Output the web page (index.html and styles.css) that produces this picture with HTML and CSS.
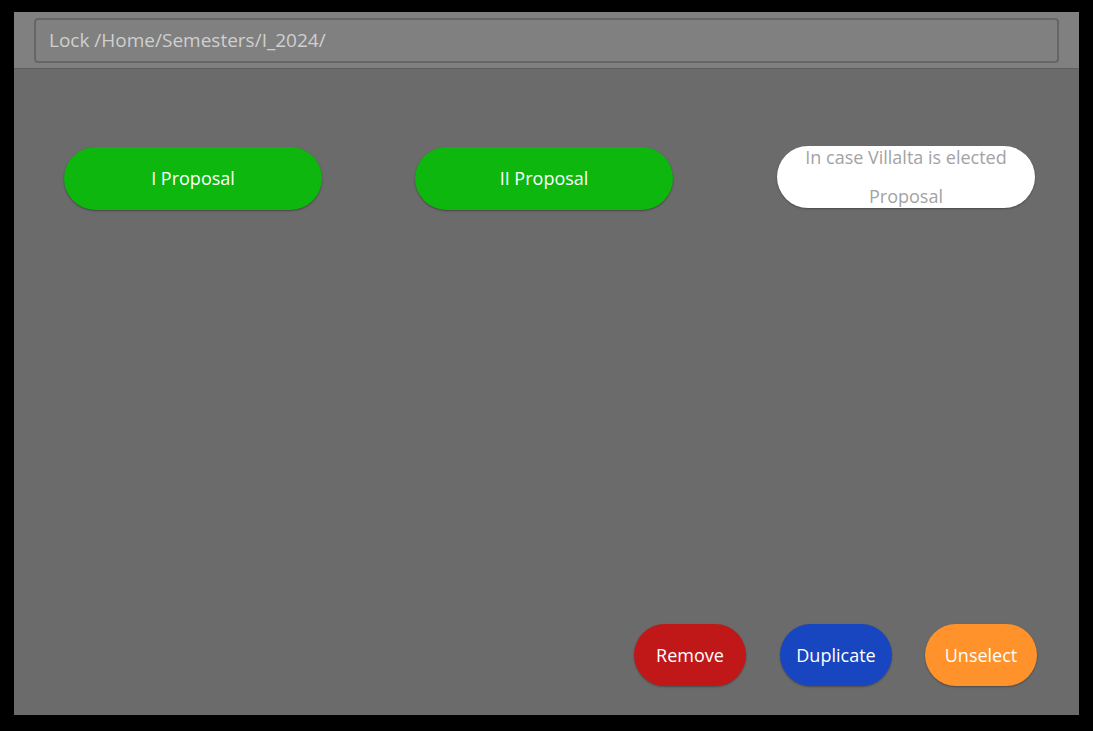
FILE: index.html
```html
<!DOCTYPE html>
<html>
<head>
<meta charset="utf-8">
<link rel="stylesheet" href="styles.css">
</head>
<body>
<div class="frame">
  <div class="panel">
    <header class="topbar">
      <div class="path">Lock /Home/Semesters/I_2024/</div>
    </header>
    <main class="content">
      <div class="options">
        <button class="pill green first">I Proposal</button>
        <button class="pill green second">II Proposal</button>
        <button class="pill white third">In case Villalta is elected<br>Proposal</button>
      </div>
      <div class="actions">
        <button class="act red">Remove</button>
        <button class="act blue">Duplicate</button>
        <button class="act orange">Unselect</button>
      </div>
    </main>
  </div>
</div>
</body>
</html>
```

FILE: styles.css
```css
html, body {
  margin: 0;
  padding: 0;
  background: #000;
}
.frame {
  width: 1093px;
  height: 731px;
  padding: 12px 14px 16px 14px;
  box-sizing: border-box;
  font-family: "Open Sans", "Noto Sans", sans-serif;
}
.panel {
  width: 1065px;
  height: 703px;
  background: #6b6b6b;
  display: flex;
  flex-direction: column;
}
.topbar {
  height: 57px;
  background: #808080;
  border-bottom: 1px solid #5e5e5e;
  box-sizing: border-box;
  padding: 6px 20px 0 20px;
}
.path {
  height: 45px;
  box-sizing: border-box;
  border: 2px solid #666666;
  border-radius: 4px;
  color: #cfcfcf;
  font-size: 19px;
  line-height: 41px;
  padding-left: 13px;
}
.content {
  flex: 1;
  display: flex;
  flex-direction: column;
  justify-content: space-between;
}
.options {
  display: flex;
  align-items: flex-start;
  padding-top: 78px;
  padding-left: 50px;
}
button {
  font-family: inherit;
  border: none;
  padding: 0;
  cursor: pointer;
}
.pill {
  width: 258px;
  height: 63px;
  border-radius: 32px;
  font-size: 18px;
  color: #fff;
}
.green {
  background: #0db70d;
  padding-bottom: 2px;
  box-shadow: 0 1px 2px rgba(0,0,0,0.35);
}
.second { margin-left: 93px; }
.third {
  margin-left: 104px;
  margin-top: -1px;
  height: 62px;
  background: #fff;
  color: #a3a3a3;
  line-height: 39px;
  display: flex;
  flex-direction: column;
  align-items: center;
  justify-content: center;
  box-shadow: 0 1px 2px rgba(0,0,0,0.3);
}
.actions {
  display: flex;
  justify-content: flex-end;
  gap: 33px;
  padding-right: 42px;
  padding-bottom: 29px;
}
.act {
  width: 112px;
  height: 62px;
  border-radius: 31px;
  color: #fff;
  font-size: 18px;
  box-shadow: 0 1px 2px rgba(0,0,0,0.3);
}
.red { background: #c01818; margin-right: 1px; }
.blue { background: #1846c0; }
.orange { background: #ff922b; }
```
